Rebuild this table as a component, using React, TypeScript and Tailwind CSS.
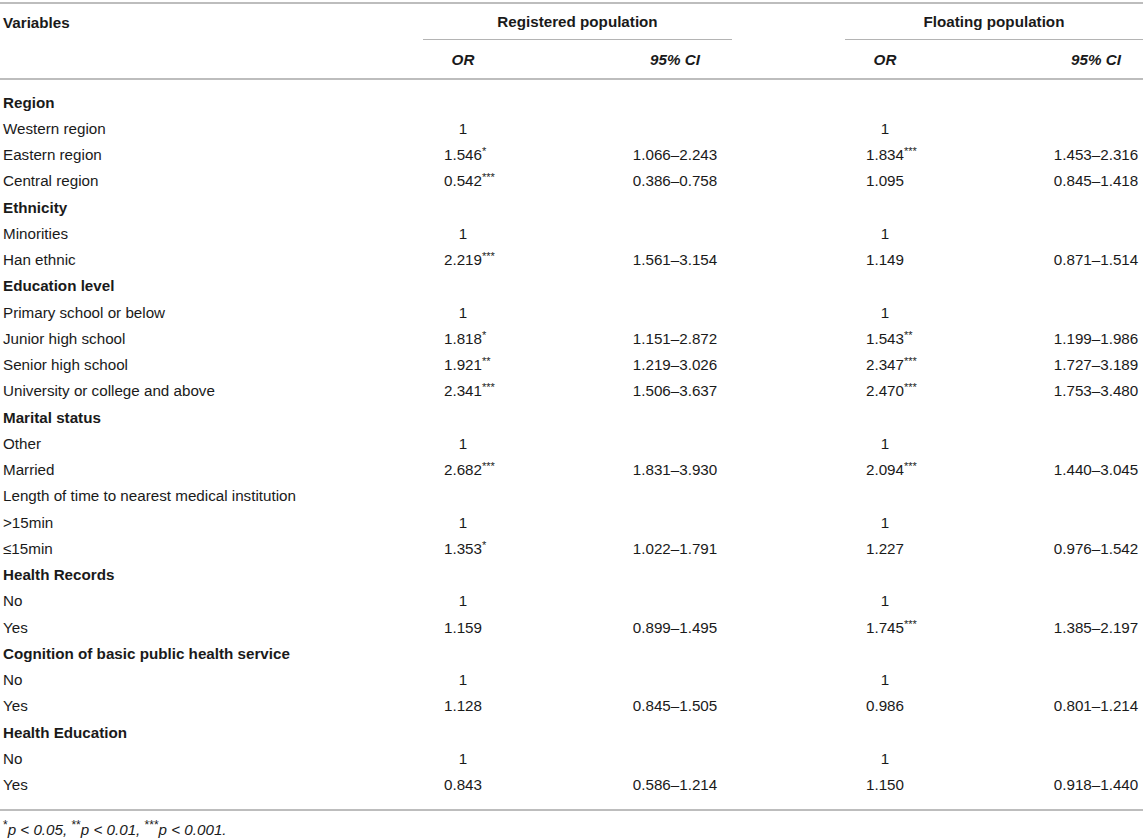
import React from "react";

type Row = {
  label: string;
  bold?: boolean;
  or1?: string;
  s1?: string;
  ci1?: string;
  or2?: string;
  s2?: string;
  ci2?: string;
};

const rows: Row[] = [
  { label: "Region", bold: true },
  { label: "Western region", or1: "1", or2: "1" },
  { label: "Eastern region", or1: "1.546", s1: "*", ci1: "1.066–2.243", or2: "1.834", s2: "***", ci2: "1.453–2.316" },
  { label: "Central region", or1: "0.542", s1: "***", ci1: "0.386–0.758", or2: "1.095", ci2: "0.845–1.418" },
  { label: "Ethnicity", bold: true },
  { label: "Minorities", or1: "1", or2: "1" },
  { label: "Han ethnic", or1: "2.219", s1: "***", ci1: "1.561–3.154", or2: "1.149", ci2: "0.871–1.514" },
  { label: "Education level", bold: true },
  { label: "Primary school or below", or1: "1", or2: "1" },
  { label: "Junior high school", or1: "1.818", s1: "*", ci1: "1.151–2.872", or2: "1.543", s2: "**", ci2: "1.199–1.986" },
  { label: "Senior high school", or1: "1.921", s1: "**", ci1: "1.219–3.026", or2: "2.347", s2: "***", ci2: "1.727–3.189" },
  { label: "University or college and above", or1: "2.341", s1: "***", ci1: "1.506–3.637", or2: "2.470", s2: "***", ci2: "1.753–3.480" },
  { label: "Marital status", bold: true },
  { label: "Other", or1: "1", or2: "1" },
  { label: "Married", or1: "2.682", s1: "***", ci1: "1.831–3.930", or2: "2.094", s2: "***", ci2: "1.440–3.045" },
  { label: "Length of time to nearest medical institution" },
  { label: ">15min", or1: "1", or2: "1" },
  { label: "≤15min", or1: "1.353", s1: "*", ci1: "1.022–1.791", or2: "1.227", ci2: "0.976–1.542" },
  { label: "Health Records", bold: true },
  { label: "No", or1: "1", or2: "1" },
  { label: "Yes", or1: "1.159", ci1: "0.899–1.495", or2: "1.745", s2: "***", ci2: "1.385–2.197" },
  { label: "Cognition of basic public health service", bold: true },
  { label: "No", or1: "1", or2: "1" },
  { label: "Yes", or1: "1.128", ci1: "0.845–1.505", or2: "0.986", ci2: "0.801–1.214" },
  { label: "Health Education", bold: true },
  { label: "No", or1: "1", or2: "1" },
  { label: "Yes", or1: "0.843", ci1: "0.586–1.214", or2: "1.150", ci2: "0.918–1.440" },
];

const GRID = "grid grid-cols-[423px_80px_115px_114px_113px_80px_124px_94px]";

function OrCell({ v, s }: { v?: string; s?: string }) {
  return (
    <div className="flex items-center justify-center">
      {v ? (
        <span className="relative">
          {v}
          {s ? (
            <span className="absolute left-full top-[2px] text-[11px] leading-none">{s}</span>
          ) : null}
        </span>
      ) : null}
    </div>
  );
}

export default function App() {
  return (
    <div
      className="w-[1143px] h-[838px] bg-white text-[#1a1a1a] text-[15.2px] overflow-hidden"
      style={{ fontFamily: '"Liberation Sans", Arial, Helvetica, sans-serif' }}
    >
      <div className="pt-[2px]">
        <div className="border-t-2 border-[#bdbdbd]">
          {/* header row 1 */}
          <div className={`${GRID} h-[36px] items-center`}>
            <div className="pl-[3px] pt-[2px] font-bold">Variables</div>
            <div className="col-span-3 h-full flex items-center justify-center pt-[2px] font-bold border-b border-[#b4b4b4]">
              Registered population
            </div>
            <div />
            <div className="col-span-3 h-full flex items-center justify-center pt-[2px] font-bold border-b border-[#b4b4b4]">
              Floating population
            </div>
          </div>
          {/* header row 2 */}
          <div className={`${GRID} h-[40px] items-center border-b-2 border-[#bdbdbd] font-bold italic`}>
            <div />
            <div className="text-center pt-[2px]">OR</div>
            <div />
            <div className="text-center pt-[2px]">95% CI</div>
            <div />
            <div className="text-center pt-[2px]">OR</div>
            <div />
            <div className="text-center pt-[2px]">95% CI</div>
          </div>
        </div>
        {/* body */}
        <div className="pt-[10px] pb-[10px] border-b-2 border-[#bdbdbd]">
          {rows.map((r, i) => (
            <div key={i} className={`${GRID} h-[26.25px] items-center`}>
              <div className={`pl-[3px] whitespace-nowrap ${r.bold ? "font-bold" : ""}`}>{r.label}</div>
              <OrCell v={r.or1} s={r.s1} />
              <div />
              <div className="text-center">{r.ci1}</div>
              <div />
              <OrCell v={r.or2} s={r.s2} />
              <div />
              <div className="text-center">{r.ci2}</div>
            </div>
          ))}
        </div>
        <div className="pl-[3px] pt-[8px] italic">
          <sup className="not-italic text-[12px]">*</sup>p &lt; 0.05,{" "}
          <sup className="not-italic text-[12px]">**</sup>p &lt; 0.01,{" "}
          <sup className="not-italic text-[12px]">***</sup>p &lt; 0.001.
        </div>
      </div>
    </div>
  );
}
